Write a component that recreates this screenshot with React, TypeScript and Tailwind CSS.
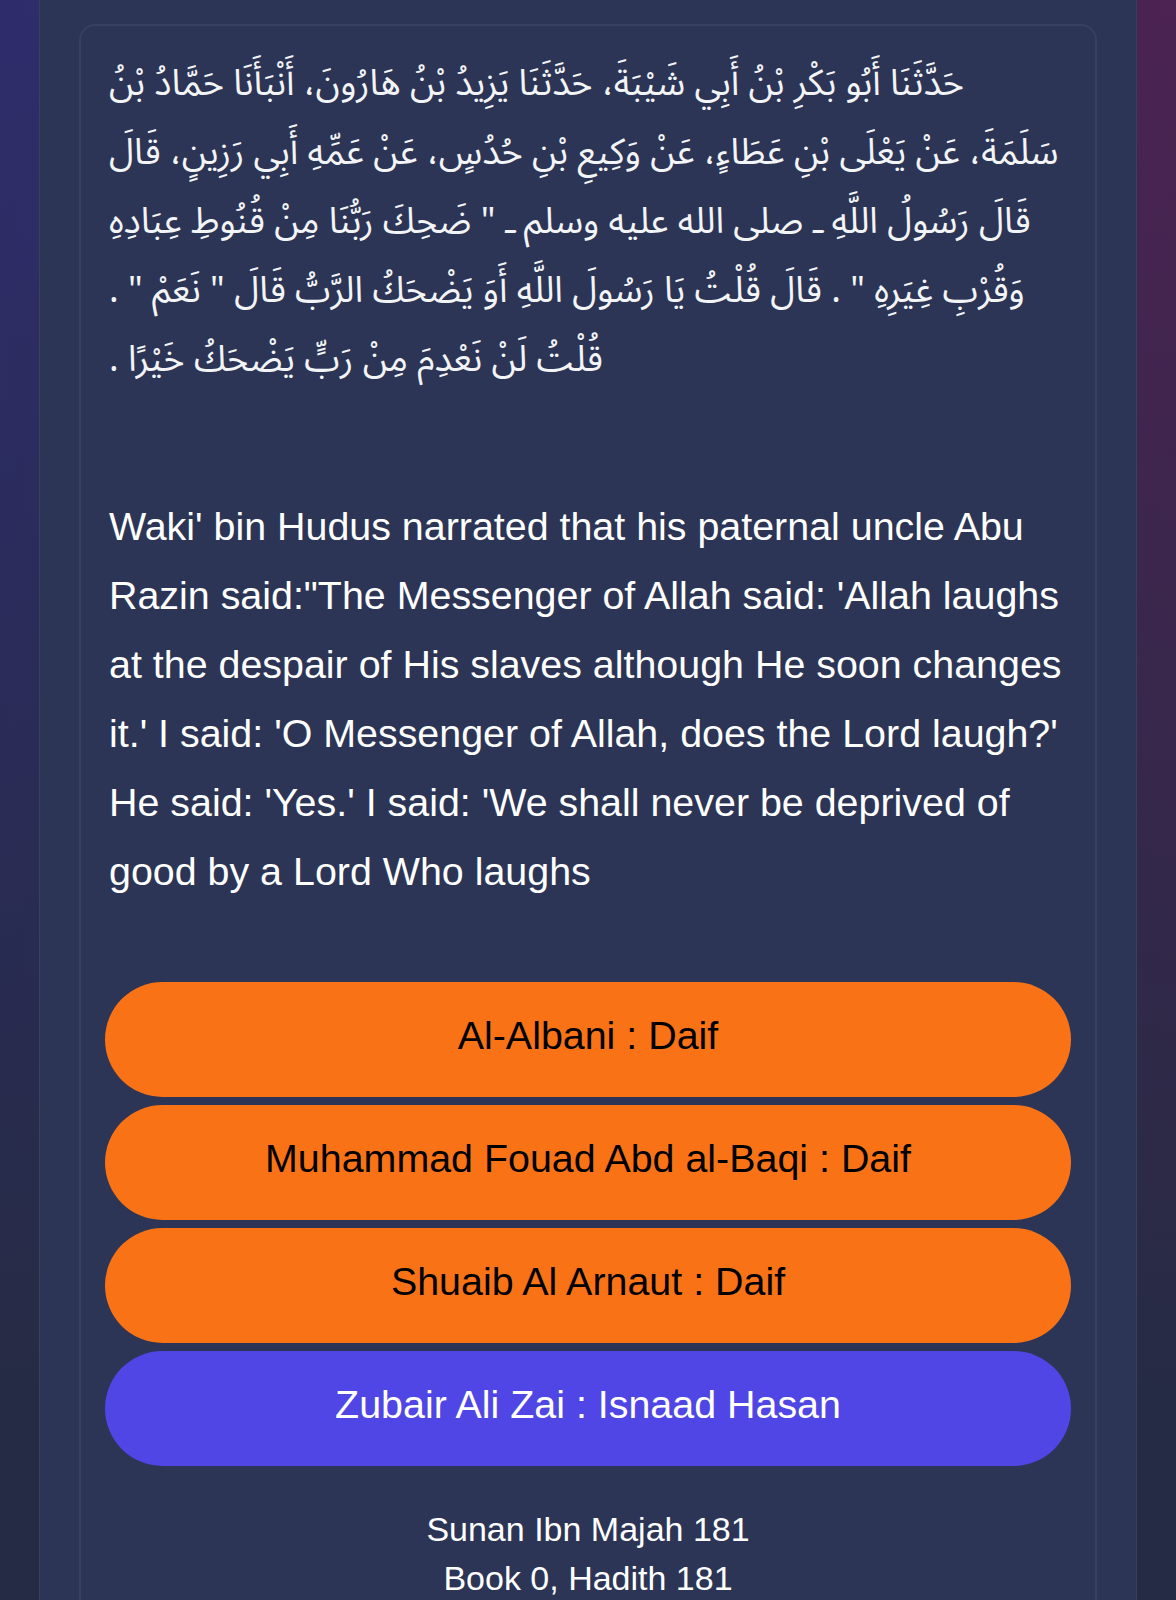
import React from 'react';

// the Arabic text kept in the same five lines as the source page
const arabicLines = [
  'حَدَّثَنَا أَبُو بَكْرِ بْنُ أَبِي شَيْبَةَ، حَدَّثَنَا يَزِيدُ بْنُ هَارُونَ، أَنْبَأَنَا حَمَّادُ بْنُ',
  'سَلَمَةَ، عَنْ يَعْلَى بْنِ عَطَاءٍ، عَنْ وَكِيعِ بْنِ حُدُسٍ، عَنْ عَمِّهِ أَبِي رَزِينٍ، قَالَ',
  'قَالَ رَسُولُ اللَّهِ ـ صلى الله عليه وسلم ـ " ضَحِكَ رَبُّنَا مِنْ قُنُوطِ عِبَادِهِ',
  'وَقُرْبِ غِيَرِهِ " . قَالَ قُلْتُ يَا رَسُولَ اللَّهِ أَوَ يَضْحَكُ الرَّبُّ قَالَ " نَعَمْ " .',
  'قُلْتُ لَنْ نَعْدِمَ مِنْ رَبٍّ يَضْحَكُ خَيْرًا .',
];

const english =
  "Waki' bin Hudus narrated that his paternal uncle Abu Razin said:\"The Messenger of Allah said: 'Allah laughs at the despair of His slaves although He soon changes it.' I said: 'O Messenger of Allah, does the Lord laugh?' He said: 'Yes.' I said: 'We shall never be deprived of good by a Lord Who laughs";

const grades = [
  { name: 'Al-Albani', grade: 'Daif', cls: 'bg-[#f97316] text-black' },
  { name: 'Muhammad Fouad Abd al-Baqi', grade: 'Daif', cls: 'bg-[#f97316] text-black' },
  { name: 'Shuaib Al Arnaut', grade: 'Daif', cls: 'bg-[#f97316] text-black' },
  { name: 'Zubair Ali Zai', grade: 'Isnaad Hasan', cls: 'bg-[#4f46e5] text-white' },
];

const App = () => {
  return (
    <div className="min-h-[1600px] bg-[linear-gradient(to_bottom,rgba(38,43,69,0)_0%,#262b45_85%),linear-gradient(to_right,#2e2d6c,#4c2352)] font-['Liberation_Sans',Arial,sans-serif]">
      <main className="mx-auto w-[1098px] min-h-[1600px] bg-[#2c3555] border-x border-[#37415f] pt-6 px-[39px]">
        {/* Hadith card */}
        <div className="rounded-2xl border-2 border-[#364061] bg-[#2c3555] p-6">
          <div
            dir="rtl"
            className="px-1 text-left text-[36px] leading-[69px] text-[#f3f4f6] font-['Noto_Sans_Arabic','Noto_Naskh_Arabic','DejaVu_Sans',sans-serif]"
          >
            {arabicLines.map((line, i) => (
              <div key={i} className="whitespace-nowrap">
                {line}
              </div>
            ))}
          </div>

          <p className="mt-[97px] px-1 text-[39.4px] leading-[69px] text-white">{english}</p>

          <div className="mt-[76px] flex flex-col gap-2">
            {grades.map((g, i) => (
              <div
                key={i}
                className={`h-[115px] pb-[8px] rounded-full flex items-center justify-center text-[39.4px] ${g.cls}`}
              >
                {g.name} : {g.grade}
              </div>
            ))}
          </div>

          <div className="mt-[39px] text-center text-[34px] leading-[49px] text-white">
            <div>Sunan Ibn Majah 181</div>
            <div>Book 0, Hadith 181</div>
          </div>
        </div>
      </main>
    </div>
  );
};

export default App;
